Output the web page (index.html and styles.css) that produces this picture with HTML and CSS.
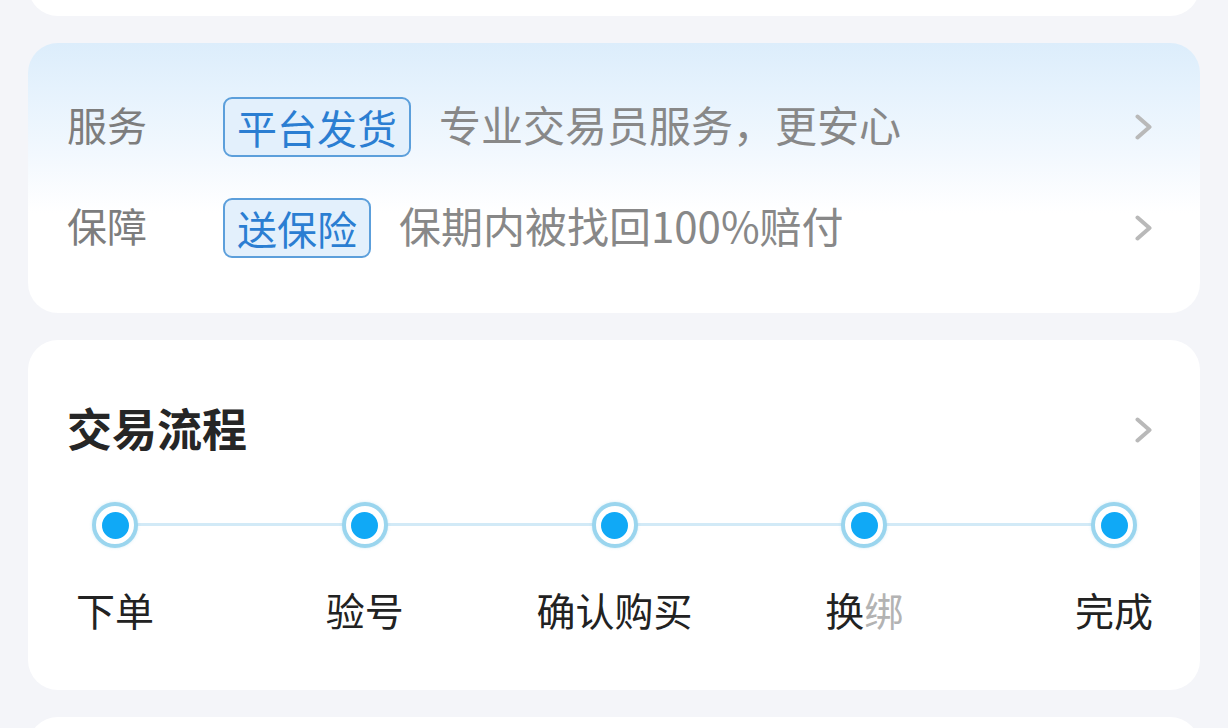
FILE: index.html
```html
<!DOCTYPE html>
<html lang="zh">
<head>
<meta charset="utf-8">
<link rel="stylesheet" href="styles.css">
</head>
<body>
<div class="page">
  <div class="card card-top"></div>

  <div class="card card-service">
    <div class="row">
      <span class="label">服务</span>
      <span class="tag">平台发货</span>
      <span class="desc">专业交易员服务，更安心</span>
      <svg class="chev" viewBox="0 0 17 26" width="17" height="26"><path d="M2.5 2.5 L14.5 13 L2.5 23.5" fill="none" stroke="#b9b9b9" stroke-width="4" stroke-linecap="round" stroke-linejoin="round"/></svg>
    </div>
    <div class="row">
      <span class="label">保障</span>
      <span class="tag">送保险</span>
      <span class="desc">保期内被找回100%赔付</span>
      <svg class="chev" viewBox="0 0 17 26" width="17" height="26"><path d="M2.5 2.5 L14.5 13 L2.5 23.5" fill="none" stroke="#b9b9b9" stroke-width="4" stroke-linecap="round" stroke-linejoin="round"/></svg>
    </div>
  </div>

  <div class="card card-flow">
    <div class="flow-head">
      <h2 class="flow-title">交易流程</h2>
      <svg class="chev" viewBox="0 0 17 26" width="17" height="26"><path d="M2.5 2.5 L14.5 13 L2.5 23.5" fill="none" stroke="#b9b9b9" stroke-width="4" stroke-linecap="round" stroke-linejoin="round"/></svg>
    </div>
    <div class="steps">
      <div class="step"><span class="dot"></span><span class="step-label">下单</span></div>
      <div class="step"><span class="dot"></span><span class="step-label">验号</span></div>
      <div class="step"><span class="dot"></span><span class="step-label">确认购买</span></div>
      <div class="step"><span class="dot"></span><span class="step-label">换<span class="faded">绑</span></span></div>
      <div class="step"><span class="dot"></span><span class="step-label">完成</span></div>
    </div>
  </div>

  <div class="card card-bottom"></div>
</div>
</body>
</html>
```

FILE: styles.css
```css
html, body {
  margin: 0;
  padding: 0;
  background: #f4f5f9;
  height: 100%;
  overflow: hidden;
}

.page {
  display: flex;
  flex-direction: column;
  gap: 27px;
  padding: 0 28px;
  font-family: "Noto Sans CJK SC", "Noto Sans", sans-serif;
}

.card {
  background: #ffffff;
  border-radius: 30px;
}

.card-top {
  height: 60px;
  margin-top: -44px;
}

.card-service {
  height: 270px;
  box-sizing: border-box;
  padding: 33px 48px 0 39px;
  background: linear-gradient(180deg, #dcedfb 0px, #e5f2fd 45px, #f2f8fe 110px, #ffffff 170px, #ffffff 100%);
}

.row {
  height: 101px;
  display: flex;
  align-items: center;
}

.label {
  width: 156px;
  flex: none;
  font-size: 40px;
  color: #7d7d7d;
  line-height: 1;
  margin-bottom: 6px;
}

.tag {
  flex: none;
  font-size: 40px;
  line-height: 56px;
  padding: 0 12px;
  border: 2px solid #5c9fdb;
  border-radius: 9px;
  background: #e3f0fc;
  color: #2b7ed2;
}

.desc {
  flex: 1;
  margin: 0 0 6px 28px;
  font-size: 42px;
  color: #888888;
  line-height: 1;
  white-space: nowrap;
}

.chev {
  flex: none;
  display: block;
}

.card-flow {
  height: 350px;
  box-sizing: border-box;
  padding: 60px 48px 0 39px;
}

.flow-head {
  display: flex;
  align-items: center;
  justify-content: space-between;
  height: 60px;
}

.flow-title {
  margin: 0 0 4px;
  font-size: 45px;
  font-weight: 700;
  color: #262626;
  line-height: 56px;
}

.steps {
  position: relative;
  display: flex;
  justify-content: space-between;
  margin: 42px 0 0 10px;
}

.steps::before {
  content: "";
  position: absolute;
  top: 21px;
  left: 38px;
  right: 38px;
  height: 3px;
  background: #d2eaf7;
}

.step {
  width: 76px;
  display: flex;
  flex-direction: column;
  align-items: center;
  position: relative;
  z-index: 1;
}

.dot {
  width: 46px;
  height: 46px;
  box-sizing: border-box;
  border: 4px solid #9ad5ee;
  border-radius: 50%;
  background: #ffffff;
  display: flex;
  align-items: center;
  justify-content: center;
  box-shadow: 0 0 3px rgba(120, 200, 235, 0.35);
}

.dot::after {
  content: "";
  width: 27px;
  height: 27px;
  border-radius: 50%;
  background: #10a9f6;
}

.step-label {
  margin-top: 35px;
  font-size: 39px;
  line-height: 52px;
  color: #222222;
  white-space: nowrap;
}

.faded {
  color: #b3b3b3;
}

.card-bottom {
  height: 80px;
}
```
